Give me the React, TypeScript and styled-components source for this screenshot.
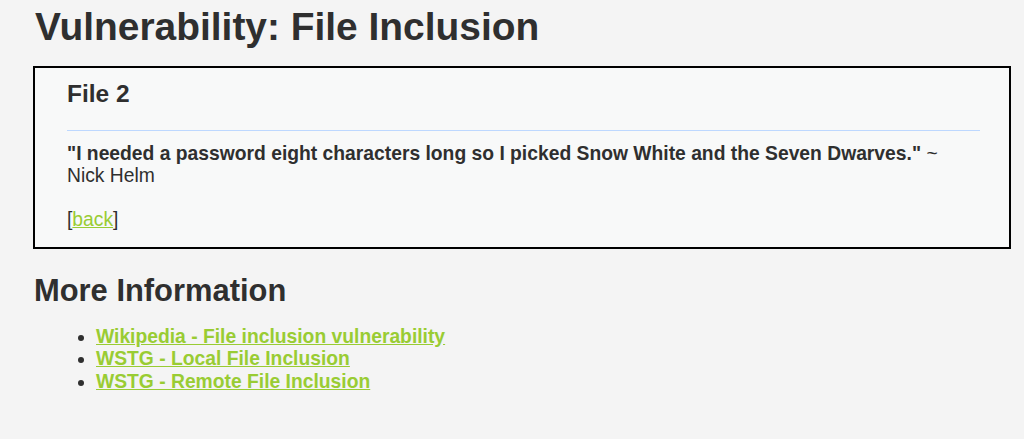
import React from "react";
import styled, { createGlobalStyle } from "styled-components";

const Global = createGlobalStyle`
  html, body { margin: 0; padding: 0; }
  body {
    background: #f4f4f4;
    color: #2f2f2f;
    font-family: "Liberation Sans", Arial, sans-serif;
    font-size: 19.3px;
    line-height: 22.2px;
  }
`;

const Page = styled.div`
  padding: 5px 13px 40px 33px;
`;

const Title = styled.h1`
  margin: 0 0 17px 2px;
  font-size: 38.9px;
  line-height: 44px;
  font-weight: bold;
  color: #2f2f2f;
`;

const Panel = styled.div`
  background: #f8f9f9;
  border: 2px solid #000;
  padding: 12px 29px 15px 32px;
`;

const PanelHeading = styled.h3`
  margin: 0;
  font-size: 24.5px;
  line-height: 28px;
  font-weight: bold;
`;

const Rule = styled.hr`
  border: 0;
  height: 1px;
  background: #bdd8ff;
  margin: 22px 0 12px;
`;

const Para = styled.p<{ $gap?: number }>`
  margin: ${(p) => p.$gap ?? 0}px 0 0;
`;

const Quote = styled.strong`
  font-weight: bold;
`;

const Link = styled.a<{ $bold?: boolean }>`
  color: #99cc33;
  text-decoration: underline;
  font-weight: ${(p) => (p.$bold ? "bold" : "normal")};
`;

const SubTitle = styled.h2`
  margin: 24px 0 17px 1px;
  font-size: 30.9px;
  line-height: 36px;
  font-weight: bold;
`;

const List = styled.ul`
  margin: 0;
  padding-left: 63px;
  list-style: disc;
`;

const Item = styled.li`
  line-height: 22.5px;
`;

export default function App() {
  return (
    <>
      <Global />
      <Page>
        <Title>Vulnerability: File Inclusion</Title>
        <Panel>
          <PanelHeading>File 2</PanelHeading>
          <Rule />
          <Para>
            <Quote>"I needed a password eight characters long so I picked Snow White and the Seven Dwarves."</Quote> ~ Nick Helm
          </Para>
          <Para $gap={22}>
            [<Link href="#">back</Link>]
          </Para>
        </Panel>
        <SubTitle>More Information</SubTitle>
        <List>
          <Item>
            <Link $bold href="#">Wikipedia - File inclusion vulnerability</Link>
          </Item>
          <Item>
            <Link $bold href="#">WSTG - Local File Inclusion</Link>
          </Item>
          <Item>
            <Link $bold href="#">WSTG - Remote File Inclusion</Link>
          </Item>
        </List>
      </Page>
    </>
  );
}
